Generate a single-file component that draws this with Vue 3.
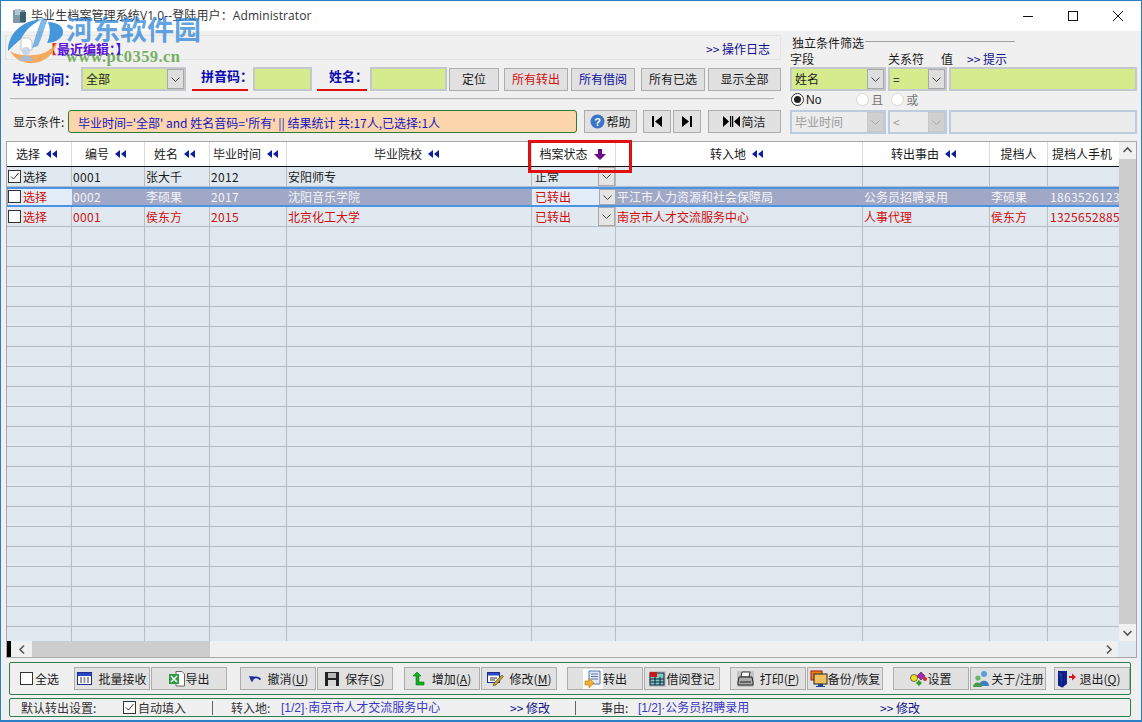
<script setup>
const columns = [
  { label: '选择', arrow: 'left' },
  { label: '编号', arrow: 'left' },
  { label: '姓名', arrow: 'left' },
  { label: '毕业时间', arrow: 'left' },
  { label: '毕业院校', arrow: 'left' },
  { label: '档案状态', arrow: 'down' },
  { label: '转入地', arrow: 'left' },
  { label: '转出事由', arrow: 'left' },
  { label: '提档人', arrow: '' },
  { label: '提档人手机', arrow: '' }
]
const rows = [
  { kind: 'plain', checked: true, cells: ['0001', '张大千', '2012', '安阳师专'], status: '正常', tail: ['', '', '', ''] },
  { kind: 'active', checked: false, cells: ['0002', '李硕果', '2017', '沈阳音乐学院'], status: '已转出', tail: ['平江市人力资源和社会保障局', '公务员招聘录用', '李硕果', '18635261234'] },
  { kind: 'red', checked: false, cells: ['0001', '侯东方', '2015', '北京化工大学'], status: '已转出', tail: ['南京市人才交流服务中心', '人事代理', '侯东方', '13256528851'] }
]
const emptyRows = Array.from({ length: 21 }, (_, i) => i)
const emptyCells = Array.from({ length: 10 }, (_, i) => i)
const isNum = (c) => /^[0-9]+$/.test(c)
</script>

<template>
  <div class="win">
    <header class="title">
      <svg class="appicon" width="16" height="16" viewBox="0 0 16 16"><rect x="1" y="2" width="12" height="13" fill="#7f9aa8"/><rect x="3" y="1" width="6" height="6" fill="#b4c6d0"/><rect x="8" y="4" width="6" height="10" fill="#3f5f6f"/></svg>
      <span class="title-text">毕业生档案管理系统V1.0--登陆用户：Administrator</span>
      <div class="winctl">
        <svg width="12" height="12" viewBox="0 0 12 12"><path d="M1 6.500h10" stroke="#111" fill="none"/></svg>
        <svg width="12" height="12" viewBox="0 0 12 12"><rect x="1.500" y="1.500" width="9" height="9" stroke="#111" fill="none"/></svg>
        <svg width="12" height="12" viewBox="0 0 12 12"><path d="M1 1l10 10M11 1L1 11" stroke="#111" fill="none"/></svg>
      </div>
    </header>

    <section class="top">
      <div class="left">
        <div class="recent">
          <span class="recent-text"><i>【</i>最近编辑：<em>】</em></span>
          <span class="link">&gt;&gt; 操作日志</span>
        </div>
        <div class="search">
          <label class="blue-label first">毕业时间：</label>
          <div class="select s-grad"><span>全部</span><b class="chev"><svg width="9" height="5" viewBox="0 0 9 5"><path d="M.5.5l4 4 4-4" stroke="#444" fill="none"/></svg></b></div>
          <label class="blue-label under u-py">拼音码：</label>
          <div class="input i-py"></div>
          <label class="blue-label under u-name">姓名：</label>
          <div class="input i-name"></div>
          <button class="btn w50 m2">定位</button>
          <button class="btn w64 m5 red">所有转出</button>
          <button class="btn w64 m3 navy">所有借阅</button>
          <button class="btn w64 m6">所有已选</button>
          <button class="btn w73 m3">显示全部</button>
        </div>
        <div class="divider"></div>
        <div class="cond">
          <span class="cond-label">显示条件:</span>
          <div class="cond-box">毕业时间='全部' and 姓名音码='所有' || 结果统计 共:17人,已选择:1人</div>
          <button class="btn w53 m7">
            <svg width="15" height="15" viewBox="0 0 15 15"><circle cx="7.500" cy="7.500" r="7" fill="#3c74c8"/><text x="7.500" y="11.500" text-anchor="middle" font-size="11" font-weight="700" fill="#fff" font-family="Liberation Sans">?</text></svg>帮助
          </button>
          <button class="btn w28 m6"><svg width="12" height="11" viewBox="0 0 12 11"><path d="M1 0h2v11H1zM11 0v11L4 5.500z" fill="#000"/></svg></button>
          <button class="btn w28 m2"><svg width="12" height="11" viewBox="0 0 12 11"><path d="M9 0h2v11H9zM1 0v11l7-5.500z" fill="#000"/></svg></button>
          <button class="btn w73 m7">
            <svg width="17" height="11" viewBox="0 0 17 11"><path d="M0 0v11l6-5.500zM17 0v11l-6-5.500zM7 0h1.200v11H7zM9 0h1.200v11H9z" fill="#000"/></svg>
            简洁
          </button>
        </div>
      </div>

      <div class="right">
        <div class="fs-head"><span>独立条件筛选</span><i></i></div>
        <div class="fs-labels"><span class="l1">字段</span><span class="l2">关系符</span><span class="l3">值</span><span class="link l4">&gt;&gt; 提示</span></div>
        <div class="fs-row">
          <div class="select s-f"><span>姓名</span><b class="chev"><svg width="9" height="5" viewBox="0 0 9 5"><path d="M.5.5l4 4 4-4" stroke="#444" fill="none"/></svg></b></div>
          <div class="select s-r"><span>=</span><b class="chev"><svg width="9" height="5" viewBox="0 0 9 5"><path d="M.5.5l4 4 4-4" stroke="#444" fill="none"/></svg></b></div>
          <div class="input i-v"></div>
        </div>
        <div class="radios">
          <span class="radio on"></span><span class="r-no">No</span>
          <span class="radio off r-and"></span><span class="dim">且</span>
          <span class="radio off r-or"></span><span class="dim">或</span>
        </div>
        <div class="fs-row off-row">
          <div class="select s-f"><span>毕业时间</span><b class="chev"><svg width="9" height="5" viewBox="0 0 9 5"><path d="M.5.5l4 4 4-4" stroke="#a8a8a8" fill="none"/></svg></b></div>
          <div class="select s-r"><span>&lt;</span><b class="chev"><svg width="9" height="5" viewBox="0 0 9 5"><path d="M.5.5l4 4 4-4" stroke="#a8a8a8" fill="none"/></svg></b></div>
          <div class="input i-v"></div>
        </div>
      </div>
    </section>

    <section class="grid">
      <div class="grid-main">
        <div class="grid-body">
          <div class="tr head">
            <div v-for="c in columns" :key="c.label" class="th">
              <span>{{ c.label }}</span>
              <svg v-if="c.arrow === 'left'" width="11" height="8" viewBox="0 0 11 8"><path d="M5 0v8L0 4zM11 0v8L6 4z" fill="#0b1f9c"/></svg>
              <svg v-if="c.arrow === 'down'" width="12" height="11" viewBox="0 0 12 11"><path d="M4 0h4v5h4l-6 6-6-6h4z" fill="#6a0a8a"/></svg>
            </div>
          </div>
          <div v-for="r in rows" :key="r.cells[1]" class="tr" :class="r.kind">
            <div class="td chk-cell">
              <span class="check" :class="{ checked: r.checked }"><svg v-if="r.checked" width="11" height="11" viewBox="0 0 11 11"><path d="M2 5.500l2.500 2.500L9.500 2" stroke="#333" fill="none"/></svg></span>
              <span>选择</span>
            </div>
            <div v-for="(c, i) in r.cells" :key="i" class="td" :class="{ num: isNum(c) }">{{ c }}</div>
            <div class="td status-cell">
              <span class="status-text">{{ r.status }}</span>
              <b class="chev"><svg width="9" height="5" viewBox="0 0 9 5"><path d="M.5.5l4 4 4-4" stroke="#444" fill="none"/></svg></b>
            </div>
            <div v-for="(c, i) in r.tail" :key="i" class="td" :class="{ num: isNum(c) }">{{ c }}</div>
          </div>
          <div v-for="n in emptyRows" :key="n" class="tr">
            <div v-for="c in emptyCells" :key="c" class="td"></div>
          </div>
        </div>
        <div class="vbar">
          <svg width="17" height="17" viewBox="0 0 17 17"><path d="M4.500 10l4-4 4 4" stroke="#555" stroke-width="1.600" fill="none"/></svg>
          <div class="vthumb"></div>
          <svg width="17" height="17" viewBox="0 0 17 17"><path d="M4.500 7l4 4 4-4" stroke="#555" stroke-width="1.600" fill="none"/></svg>
        </div>
      </div>
      <div class="hbar">
        <i class="marker"></i>
        <svg width="17" height="15" viewBox="0 0 17 15"><path d="M10 3.500l-4 4 4 4" stroke="#555" stroke-width="1.600" fill="none"/></svg>
        <div class="hthumb"></div>
        <svg class="h-right" width="17" height="15" viewBox="0 0 17 15"><path d="M7 3.500l4 4-4 4" stroke="#555" stroke-width="1.600" fill="none"/></svg>
        <i class="corner"></i>
      </div>
    </section>

    <section class="toolbar">
      <span class="check all"></span><span class="all-text">全选</span>
      <button class="btn tb g-a">
        <svg width="15" height="15" viewBox="0 0 15 15"><rect x=".5" y="1.500" width="14" height="12" fill="#fff" stroke="#1c2f8c"/><rect x="1" y="2" width="13" height="3" fill="#2848c8"/><path d="M3 7h2M6.500 7h2M10 7h2M3 9h2M6.500 9h2M10 9h2M3 11h2M6.500 11h2M10 11h2" stroke="#333"/></svg>
        <span class="sp">批量接收</span>
      </button>
      <button class="btn tb g1">
        <svg width="17" height="16" viewBox="0 0 17 16"><path d="M8 .5h6l2.500 2.500v12H8z" fill="#fff" stroke="#666"/><rect x="1" y="3" width="10" height="10" fill="#2e9a44"/><path d="M3 5l6 6M9 5l-6 6" stroke="#fff" stroke-width="1.500"/></svg>
        <span>导出</span>
      </button>
      <button class="btn tb g-b">
        <svg width="14" height="10" viewBox="0 0 14 10"><path d="M4 7.500C4 3 9 2 12.500 5.500" stroke="#1f2f9c" stroke-width="1.800" fill="none"/><path d="M1 2l5 .5L3 7z" fill="#1f2f9c"/></svg>
        <span class="sp">撤消(<u>U</u>)</span>
      </button>
      <button class="btn tb g1">
        <svg width="14" height="14" viewBox="0 0 14 14"><rect width="14" height="14" fill="#222"/><rect x="3" y="1" width="8" height="5" fill="#b8b8b8"/><rect x="3" y="8" width="8" height="6" fill="#d8d8d8"/></svg>
        <span class="sp">保存(<u>S</u>)</span>
      </button>
      <button class="btn tb g-c">
        <svg width="13" height="15" viewBox="0 0 13 15"><path d="M4 1l4 4H6v6h5v3H3V5H0z" fill="#0fae1e" stroke="#097d14" stroke-width=".6"/></svg>
        <span class="sp">增加(<u>A</u>)</span>
      </button>
      <button class="btn tb g1">
        <svg width="17" height="15" viewBox="0 0 17 15"><rect x=".5" y="1.500" width="12" height="10" fill="#fff" stroke="#1c2f8c"/><rect x="1" y="2" width="11" height="2.500" fill="#2848c8"/><path d="M3 7h7M3 9h5" stroke="#333"/><path d="M15 4l1.500 1.500L9 14l-3 1 1-3z" fill="#c8a020" stroke="#333" stroke-width=".5"/></svg>
        <span class="sp">修改(<u>M</u>)</span>
      </button>
      <button class="btn tb g-d">
        <svg class="paper" width="20" height="20" viewBox="0 0 20 20"><rect width="20" height="20" fill="#fbfbfb"/><path d="M6 2h11v13H6z" fill="#dfe8f4" stroke="#5a78a8"/><path d="M8 5h7M8 7.500h7M8 10h7" stroke="#5a78a8"/><path d="M6 9v3H2v4h4v3l5-5z" fill="#f2b030" stroke="#b07810" stroke-width=".6"/></svg>
        <span>转出</span>
      </button>
      <button class="btn tb g1">
        <svg class="paper" width="17" height="16" viewBox="0 0 17 16"><rect width="17" height="16" fill="#c8c8c8"/><rect x="1" y="2" width="14" height="12" fill="#7fc8c0" stroke="#124"/><rect x="1" y="1" width="7" height="5" fill="#c81818"/><path d="M1 8h14M1 11h14M6 6v8M11 6v8" stroke="#124"/></svg>
        <span>借阅登记</span>
      </button>
      <button class="btn tb g-e">
        <svg class="paper" width="17" height="16" viewBox="0 0 17 16"><rect width="17" height="16" fill="#c4c4c4"/><path d="M5 1h8l-1 5H4z" fill="#fff" stroke="#333"/><path d="M2 6h13l1 5v3H1v-3z" fill="#aaa" stroke="#222"/><path d="M3 11h11" stroke="#222"/></svg>
        <span class="sp">打印(<u>P</u>)</span>
      </button>
      <button class="btn tb g1">
        <svg width="18" height="18" viewBox="0 0 18 18"><rect x="1" y="1" width="11" height="9" fill="#e8841c" stroke="#a01a10"/><rect x="4" y="4" width="13" height="10" fill="#f0c060" stroke="#222"/><path d="M8 14h5v2h2v1H6v-1h2z" fill="#1c4890"/></svg>
        <span>备份/恢复</span>
      </button>
      <button class="btn tb g-f">
        <svg width="17" height="14" viewBox="0 0 17 14"><circle cx="4" cy="6" r="3.500" fill="#f2e020" stroke="#222" stroke-width=".6"/><path d="M11 0l4 4-4 4-4-4z" fill="#b020c0" stroke="#222" stroke-width=".6"/><path d="M9 8l3 3-3 3-3-3z" fill="#28a028"/><circle cx="15" cy="7" r="2" fill="#e02020"/></svg>
        <span>设置</span>
      </button>
      <button class="btn tb g1">
        <svg width="19" height="18" viewBox="0 0 19 18"><circle cx="12" cy="4" r="3" fill="#58a0d8"/><path d="M7 16c0-7 10-7 10 0z" fill="#3c80c0"/><circle cx="6" cy="8" r="2.600" fill="#68b868"/><path d="M1 17c0-6 9-6 9 0z" fill="#489848"/></svg>
        <span>关于/注册</span>
      </button>
      <button class="btn tb g-g">
        <svg width="20" height="18" viewBox="0 0 20 18"><path d="M1 1h9v13l-5 3.500-4-2z" fill="#10208c"/><path d="M1 1l5 2v14.500" fill="#2030a0" stroke="#060c50" stroke-width=".6"/><path d="M12 6h3V3.500L19 7l-4 3.500V8h-3z" fill="#d01c1c"/></svg>
        <span class="sp">退出(<u>Q</u>)</span>
      </button>
    </section>

    <section class="statusbar">
      <span class="st-label">默认转出设置:</span>
      <span class="check checked st-check"><svg width="11" height="11" viewBox="0 0 11 11"><path d="M2 5.500l2.500 2.500L9.500 2" stroke="#333" fill="none"/></svg></span>
      <span class="st-auto">自动填入</span>
      <i class="st-sep s1"></i>
      <span class="st-in">转入地:</span>
      <span class="st-val v1">[1/2]·南京市人才交流服务中心</span>
      <span class="link st-edit e1">&gt;&gt; 修改</span>
      <i class="st-sep s2"></i>
      <span class="st-why">事由:</span>
      <span class="st-val v2">[1/2]·公务员招聘录用</span>
      <span class="link st-edit e2">&gt;&gt; 修改</span>
    </section>

    <div class="watermark" aria-hidden="true">
      <svg class="wm-logo" width="66" height="66" viewBox="0 0 66 66">
        <path d="M4 36C4 20 16 6 38 4 30 8 22 14 17 24 12 28 8 32 4 36z" fill="#2c8ad8" opacity=".88"/>
        <path d="M38 3c4 0 6 1 5 3-3 8-5 16-9 25l-6 2c3-10 6-20 10-30z" fill="#2c8ad8" opacity=".6"/>
        <path d="M44 7c10 0 16 5 15 11-1 6-9 10-16 10 3-6 4-14 1-21z" fill="#2c8ad8" opacity=".88"/>
        <path d="M6 36c4 8 14 13 24 12 12-1 20-10 23-20-7 8-15 12-23 12-10 1-18 0-24-4z" fill="#f2a048" opacity=".88"/>
        <path d="M17 23h8l3 3v9H17z" fill="#fff" opacity=".9" stroke="#9a8a70" stroke-width=".5"/>
        <circle cx="22" cy="36" r="4" fill="#c4d2e8" opacity=".95"/>
        <path d="M15 46c0-7 14-7 14 0z" fill="#a8bcdc" opacity=".95"/>
      </svg>
      <span class="wm-cn">河东软件园</span>
      <span class="wm-url">www.pc0359.cn</span>
    </div>
    <div class="hl"></div>
  </div>
</template>

<style scoped>
* { box-sizing: border-box; }
.win {
  position: relative;
  width: 1142px;
  height: 722px;
  overflow: hidden;
  display: flex;
  flex-direction: column;
  background: #f0f0f0;
  border: 1px solid #2b7fc4;
  border-bottom-width: 2px;
  font: 12px/16px "Noto Sans CJK SC", "Liberation Sans", sans-serif;
  color: #1a1a1a;
}
button { font: inherit; padding: 0; }

.title { height: 30px; background: #fff; display: flex; align-items: center; padding: 0 0 0 11px; flex: none; }
.appicon { flex: none; }
.title-text { margin-left: 3px; font: 12px/16px "Open Sans", "Noto Sans CJK SC", sans-serif; color: #333; letter-spacing: .1px; }
.winctl { margin-left: auto; display: flex; gap: 33px; padding-right: 17px; align-items: center; }

.top { display: flex; height: 110px; flex: none; }
.left { width: 780px; flex: none; padding-top: 4px; }
.recent { height: 25px; margin-left: 4px; border: 1px solid #e4e4e4; border-left-color: #dcdcdc; display: flex; align-items: center; justify-content: space-between; padding: 2px 10px 0 38px; }
.recent-text { color: #5a10d8; font-weight: 700; font-size: 13px; }
.recent-text i { color: #e03020; font-style: normal; }
.recent-text em { color: #3010e0; font-style: normal; }
.link { color: #10108c; }

.search { display: flex; align-items: center; height: 26px; margin-top: 6px; }
.blue-label { color: #0a0ab0; font-weight: 700; font-size: 13px; white-space: nowrap; }
.first { margin-left: 11px; width: 69px; }
.under { position: relative; height: 18px; margin-top: -4px; }
.under::after { content: ""; position: absolute; left: 0; right: 0; bottom: -5px; height: 2px; background: #e01010; }
.u-py { margin-left: 6px; width: 56px; padding-left: 9px; }
.u-name { margin-left: 5px; width: 50px; padding-left: 12px; }
.select { display: flex; align-items: center; height: 24px; border: 2px solid #c4c8cc; background: #d6ec8c; justify-content: space-between; padding-left: 3px; }
.chev { width: 17px; height: 100%; background: #dedede; border: 1px solid #a8a8a8; display: flex; align-items: center; justify-content: center; flex: none; }
.s-grad { width: 105px; }
.input { height: 24px; border: 2px solid #c4c8cc; background: #d6ec8c; }
.i-py { width: 59px; margin-left: 5px; }
.i-name { width: 77px; margin-left: 3px; }
.btn { height: 23px; background: #e1e1e1; border: 1px solid #adadad; color: #1a1a1a; display: inline-flex; align-items: center; justify-content: center; flex: none; }
.w28 { width: 28px; } .w50 { width: 50px; } .w53 { width: 53px; } .w64 { width: 64px; } .w73 { width: 73px; }
.m2 { margin-left: 2px; } .m3 { margin-left: 3px; } .m5 { margin-left: 5px; } .m6 { margin-left: 6px; } .m7 { margin-left: 7px; }
.red { color: #d01010; } .navy { color: #10109c; }

.divider { height: 2px; margin: 6px 7px 0 9px; background: #b4b4b4; border-bottom: 1px solid #e8e8e8; }
.cond { display: flex; align-items: center; height: 24px; margin-top: 9px; }
.cond-label { margin-left: 12px; width: 55px; padding-top: 1px; }
.cond-box { width: 509px; height: 23px; background: #fdd5ac; border: 1px solid #2e7d32; border-radius: 3px; color: #1414c0; padding: 4px 0 0 9px; white-space: nowrap; }
.cond .btn { padding-top: 1px; }
.cond .btn svg:first-child { margin-right: 1px; }
.cond .w73 svg { margin-right: 4px; }

.right { flex: 1; padding: 4px 0 0 9px; }
.fs-head { display: flex; align-items: center; height: 16px; margin-left: 2px; }
.fs-head i { width: 150px; height: 1px; background: #a0a0a0; margin-top: -3px; margin-left: 1px; }
.fs-labels { display: flex; height: 16px; }
.l1 { width: 98px; } .l2 { width: 53px; } .l3 { width: 26px; }
.fs-row { display: flex; gap: 2px; height: 24px; }
.s-f { width: 96px; }
.s-r { width: 59px; }
.i-v { width: 188px; }
.radios { display: flex; align-items: center; height: 19px; margin-top: -1px; }
.radio { width: 13px; height: 13px; border-radius: 50%; background: #fff; border: 1px solid #333; position: relative; flex: none; margin-left: 1px; }
.radio.on::after { content: ""; position: absolute; left: 2px; top: 2px; width: 7px; height: 7px; border-radius: 50%; background: #222; }
.radio.off { border-color: #d8d8d8; }
.r-no { margin-left: 2px; font-family: "Liberation Sans", sans-serif; }
.r-and { margin-left: 35px; }
.r-or { margin-left: 8px; }
.dim { margin-left: 2px; color: #777; }
.off-row { margin-top: 1px; color: #9a9a9a; }
.off-row .select, .off-row .input { background: #ececec; border-color: #bccbe0; }
.off-row .chev { background: #d0d0d0; border-color: #c8c8c8; }

.grid { margin: 0 4px 0 5px; height: 517px; flex: none; border: 1px solid #a8a8a8; display: flex; flex-direction: column; background: #fff; }
.grid-main { flex: 1; display: flex; min-height: 0; }
.grid-body { width: 1112px; overflow: hidden; background: #e1e9f0; }
.tr { display: grid; grid-template-columns: 65px 73px 65px 77px 245px 84px 247px 127px 58px 72px; height: 20px; }
.th { background: #fff; display: flex; align-items: center; justify-content: center; gap: 6px; border-right: 1px solid #d8dce0; white-space: nowrap; overflow: hidden; padding-right: 5px; }
.th:nth-child(6) { padding-right: 2px; }
.th:nth-child(9) { padding-right: 0; }
.th:last-child { border-right: 0; padding-right: 4px; }
.tr.head { height: 24px; border-bottom: 1px solid #111; box-sizing: content-box; }
.td { border-right: 1px solid #b6bcc2; border-bottom: 1px solid #b6bcc2; padding: 2px 0 0 1px; white-space: nowrap; overflow: hidden; line-height: 16px; display: flex; }
.td:last-child { border-right: 0; padding-left: 2px; }
.num { letter-spacing: .35px; }
.chk-cell { padding-left: 1px; gap: 2px; }
.check { display: inline-flex; width: 13px; height: 13px; border: 1px solid #333; background: #fff; flex: none; align-items: center; justify-content: center; margin-top: 1px; }
.status-cell { padding: 0 0 0 3px; justify-content: space-between; }
.status-text { padding-top: 2px; }
.status-cell .chev { height: 19px; width: 17px; background: #e4e4e4; }
.plain .status-text { height: 15px; overflow: hidden; }
.red .td { color: #d00c0c; }
.active { background: #a0a8c6; box-shadow: inset 0 2px 0 #4a93e6, inset 0 -2px 0 #4a93e6; }
.active .td { color: #f4f4f8; border: 0; }
.active .chk-cell, .active .status-cell { background: #e3edf7; color: #d00c0c; margin: 2px 0; padding-top: 0; }
.active .status-cell .status-text { padding-top: 0; }
.active .status-cell .chev { height: 16px; }
.active .chk-cell { margin-left: 1px; padding-left: 0; }
.vbar { flex: 1; background: #f0f0f0; display: flex; flex-direction: column; align-items: center; justify-content: space-between; }
.vthumb { flex: 1; width: 17px; background: #cdcdcd; }
.hbar { height: 16px; flex: none; display: flex; align-items: center; background: #f0f0f0; }
.marker { width: 4px; height: 100%; background: #000; flex: none; }
.hbar > svg:first-of-type { margin-left: 3px; }
.hthumb { width: 178px; height: 100%; background: #cdcdcd; margin-left: 1px; }
.h-right { margin-left: auto; }
.corner { width: 18px; height: 100%; background: #e1e9f0; flex: none; margin-left: 1px; }

.toolbar { margin: 4px 10px 0 8px; height: 33px; flex: none; border: 1px solid #2e7d4f; border-radius: 2px; display: flex; align-items: center; }
.all { margin-left: 10px; margin-top: 0; }
.all-text { margin-left: 2px; width: 32px; }
.tb { width: 76px; }
.sp { margin-left: 6px; }
.g-a { margin-left: 10px; } .g1 { margin-left: 1px; }
.g-b { margin-left: 13px; } .g-c { margin-left: 11px; }
.g-d { margin-left: 10px; } .g-e { margin-left: 10px; }
.g-f { margin-left: 10px; } .g-g { margin-left: 8px; padding-right: 6px; }
.g-g .sp { margin-left: 2px; }

.statusbar { margin: 3px 10px 0 8px; height: 19px; flex: none; border: 1px solid #2e7d4f; border-radius: 2px; display: flex; align-items: center; white-space: nowrap; color: #333; }
.st-label { margin-left: 11px; width: 102px; }
.st-check { margin-top: 0; }
.st-auto { margin-left: 2px; width: 74px; }
.st-sep { width: 1px; height: 14px; background: #666; flex: none; }
.st-in { margin-left: 18px; width: 50px; }
.st-val { color: #3838c0; font-family: "Liberation Sans", "Noto Sans CJK SC", sans-serif; }
.v1 { width: 229px; }
.e1 { width: 65px; }
.st-why { margin-left: 25px; width: 37px; }
.v2 { width: 242px; }
.watermark { position: absolute; left: 0; top: 14px; width: 210px; height: 66px; pointer-events: none; }
.wm-logo { position: absolute; left: 3px; top: 0; }
.wm-cn { position: absolute; left: 65px; top: -2px; font: 700 27px/32px "Noto Sans CJK SC", sans-serif; color: rgba(38, 128, 214, .72); white-space: nowrap; }
.wm-url { position: absolute; left: 65px; top: 33px; font: 700 16.500px/18px "Liberation Serif", serif; color: rgba(70, 150, 40, .72); white-space: nowrap; letter-spacing: .4px; }
.hl { position: absolute; left: 527px; top: 139px; width: 104px; height: 33px; border: 3px solid #e01010; pointer-events: none; }
</style>
